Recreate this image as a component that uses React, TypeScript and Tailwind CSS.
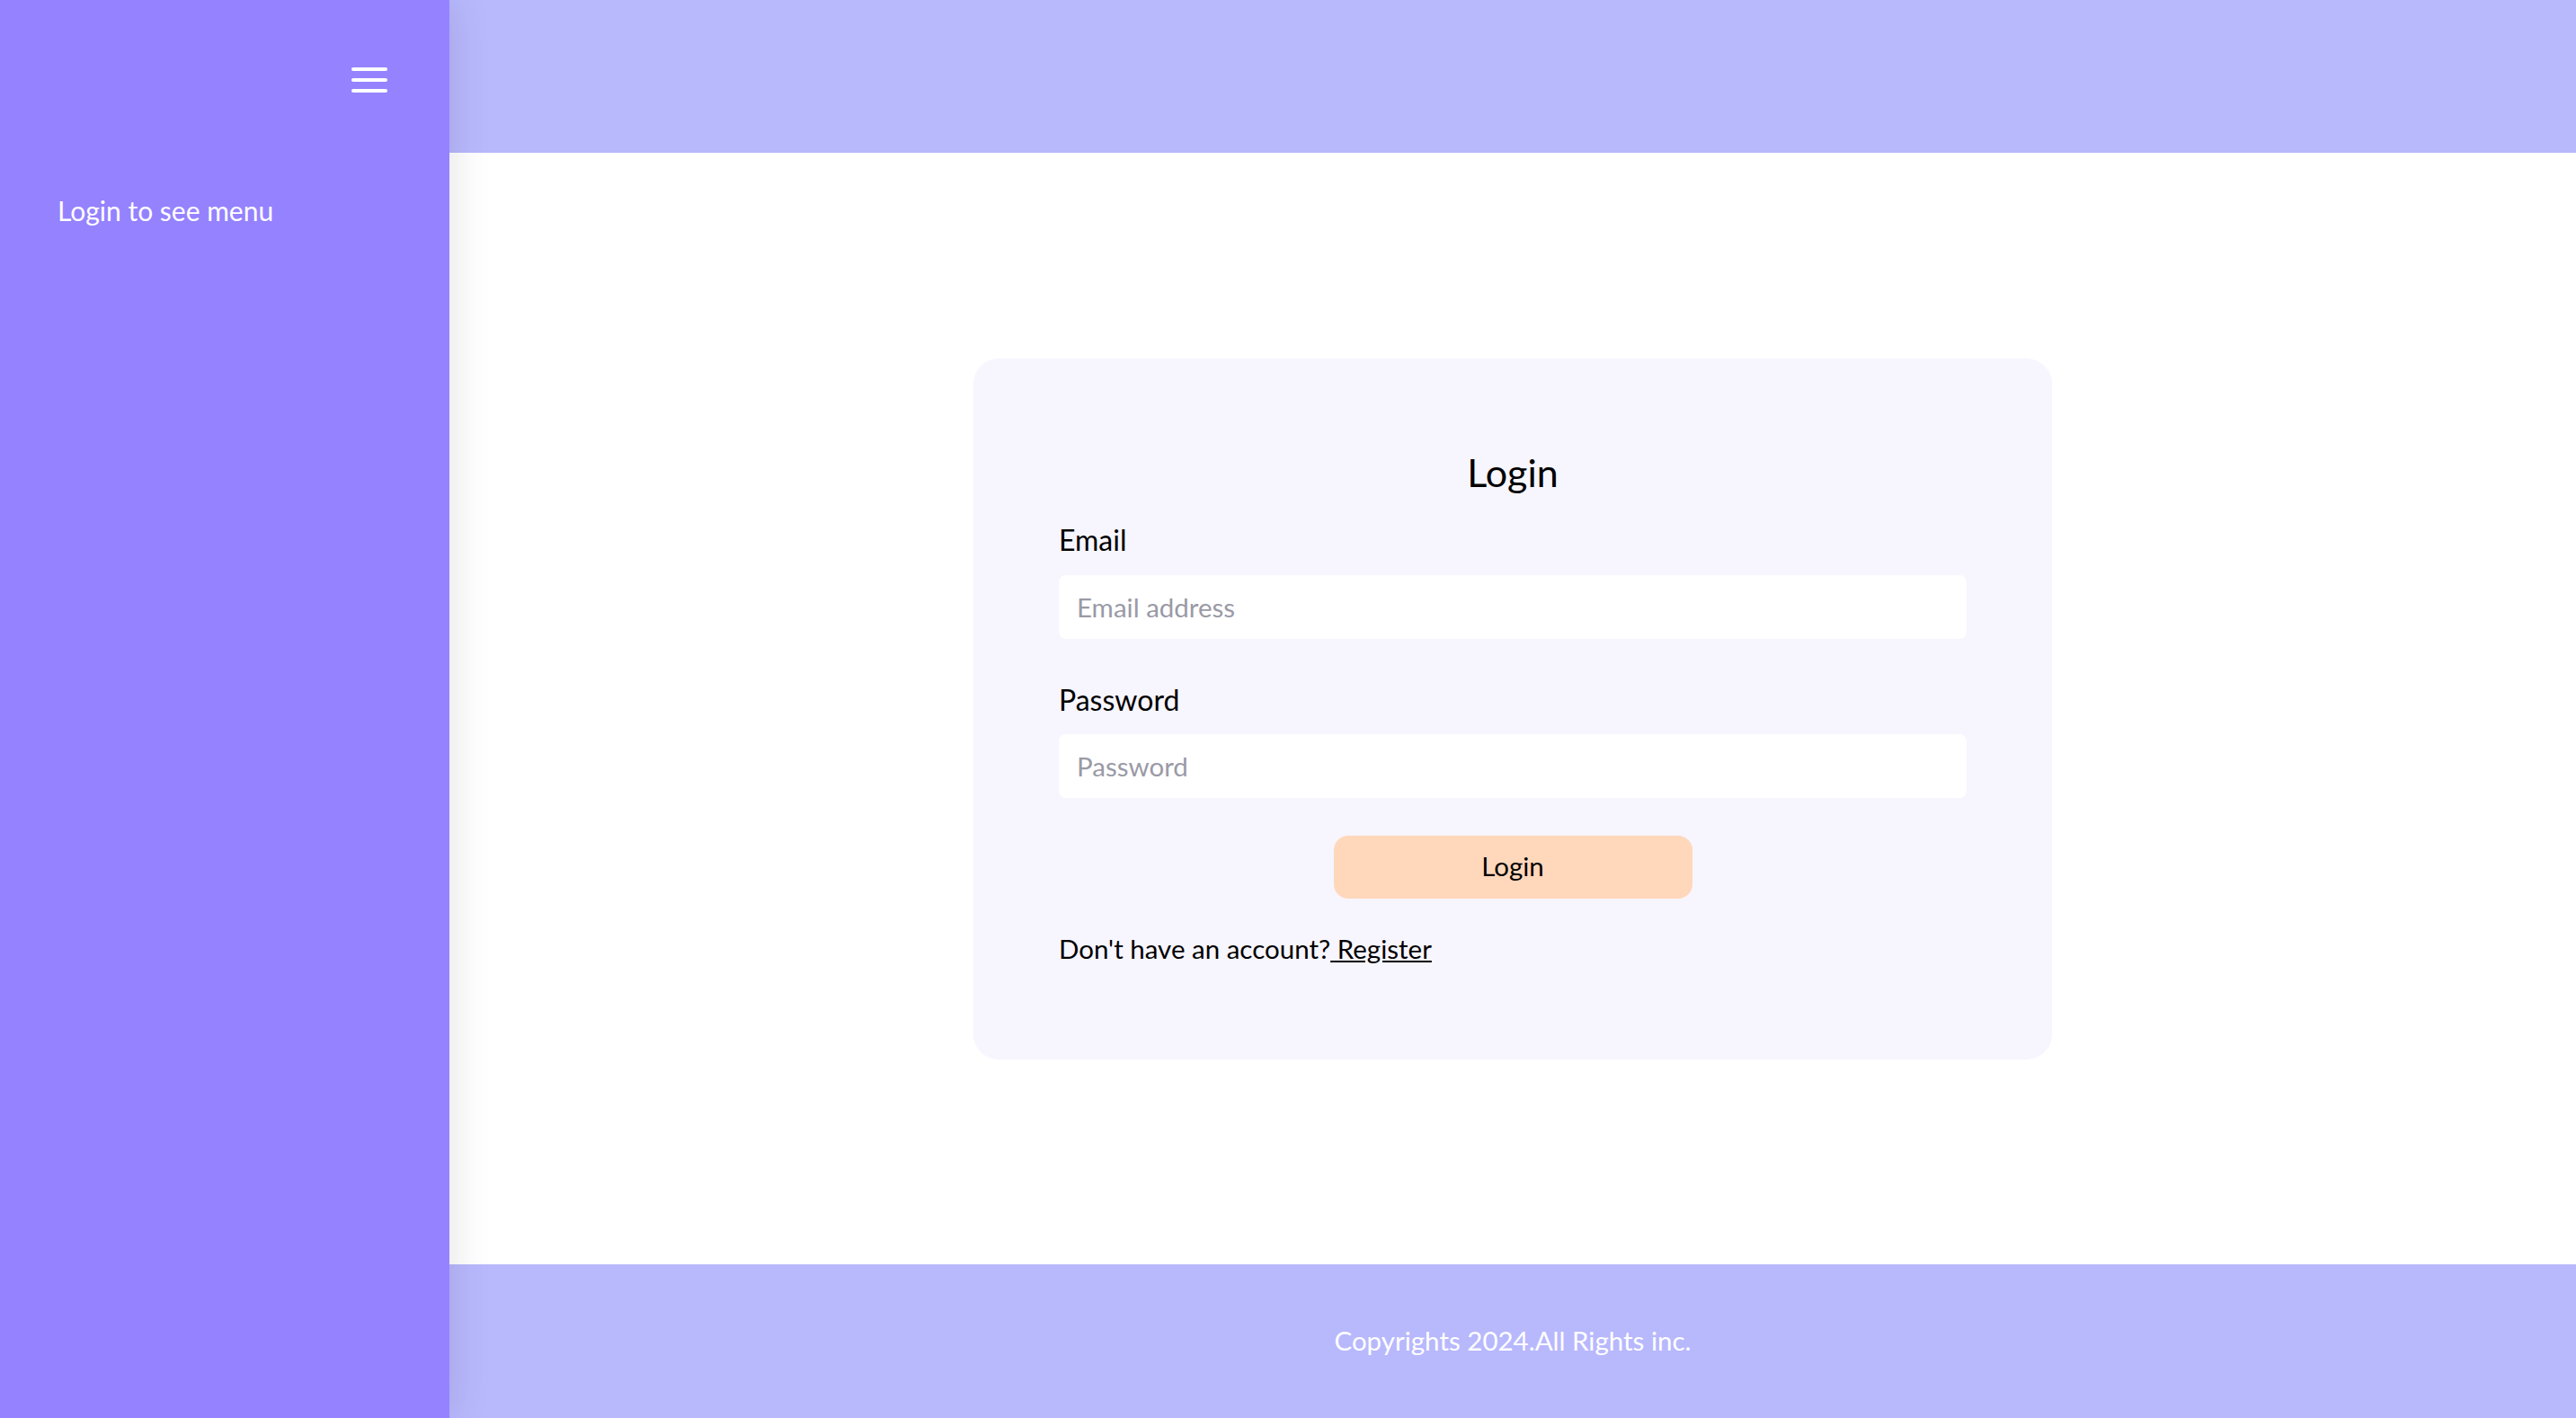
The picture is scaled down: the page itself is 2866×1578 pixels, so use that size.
import React from "react";

export default function App() {
  return (
    <div
      className="flex w-[2866px] h-[1578px] overflow-hidden bg-white"
      style={{ fontFamily: "Lato, 'Open Sans', sans-serif" }}
    >
      <aside className="relative z-10 flex w-[500px] shrink-0 flex-col bg-[#9582ff] shadow-[0_0_45px_rgba(0,0,0,0.12)]">
        <div className="flex h-[170px] justify-end pr-[69px] pt-[74px]">
          <button className="flex h-[30px] w-[40px] flex-col justify-between py-[1px]" aria-label="menu">
            <span className="block h-[4px] w-full rounded-full bg-white" />
            <span className="block h-[4px] w-full rounded-full bg-white" />
            <span className="block h-[4px] w-full rounded-full bg-white" />
          </button>
        </div>
        <div className="pl-[64px] pt-[44px] text-[30px] leading-[40px] text-white">Login to see menu</div>
      </aside>

      <div className="flex min-w-0 flex-1 flex-col">
        <header className="h-[170px] shrink-0 bg-[#b8b8fd]" />
        <main className="flex flex-1 items-center justify-center">
          <div className="w-[1200px] rounded-[28px] bg-[#f7f5fe] px-[95px] pb-[103px] pt-[101px]">
            <h2 className="text-center text-[43px] leading-[52px] text-black">Login</h2>
            <label className="mt-[29px] block text-[32px] leading-[40px] text-black">Email</label>
            <input
              type="email"
              placeholder="Email address"
              className="mt-[19px] block h-[71px] w-full rounded-[8px] bg-white px-[20px] text-[29.5px] text-black outline-none placeholder:text-[#9a9aa6]"
            />
            <label className="mt-[48px] block text-[32px] leading-[40px] text-black">Password</label>
            <input
              type="password"
              placeholder="Password"
              className="mt-[18px] block h-[71px] w-full rounded-[8px] bg-white px-[20px] text-[29.5px] text-black outline-none placeholder:text-[#9a9aa6]"
            />
            <div className="mt-[42px] flex justify-center">
              <button className="h-[70px] w-[399px] rounded-[16px] bg-[#ffd7bb] text-[29.5px] text-black">Login</button>
            </div>
            <p className="mt-[36px] text-[29.5px] leading-[40px] text-black">
              Don't have an account?<a href="#" className="underline"> Register</a>
            </p>
          </div>
        </main>
        <footer className="flex h-[171px] shrink-0 items-center justify-center bg-[#b8b8fd] text-[29.5px] text-white">
          Copyrights 2024.All Rights inc.
        </footer>
      </div>
    </div>
  );
}
